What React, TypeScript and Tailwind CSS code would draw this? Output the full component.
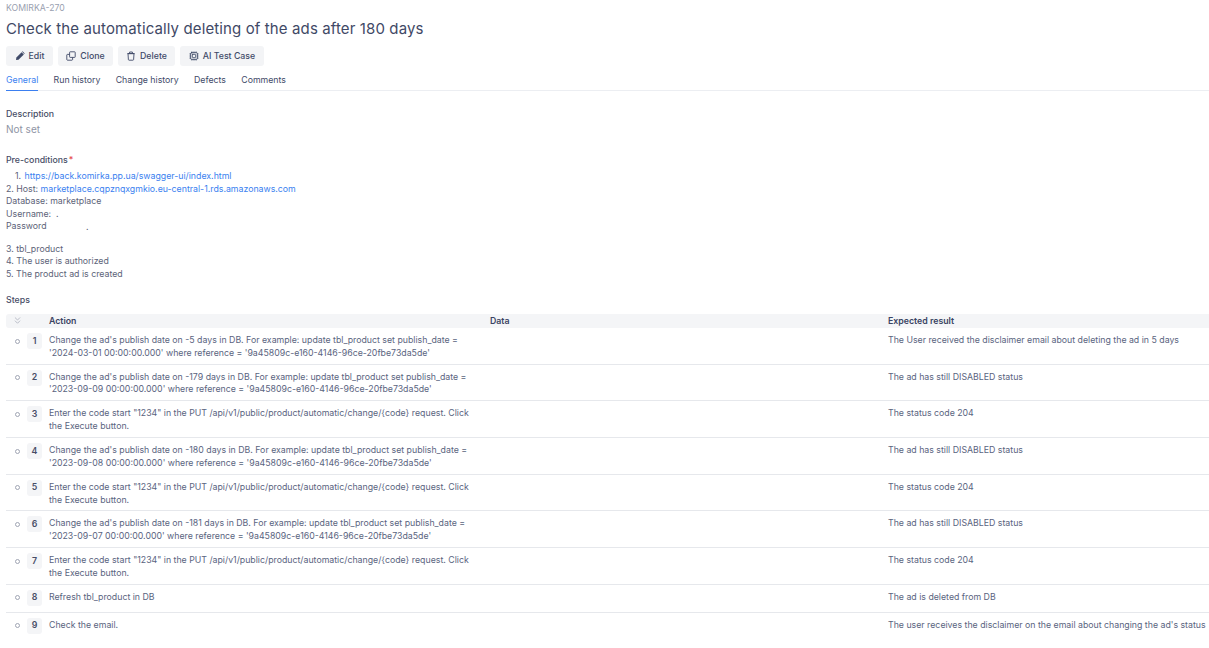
import { ChevronsDown, Cpu } from 'lucide-react';
import type { ReactNode } from 'react';

type Step = {
  num: number;
  action: ReactNode;
  result: string;
  height: string;
};

const PencilIcon = () => (
  <svg width="10" height="10" viewBox="0 0 10 10" fill="currentColor">
    <path d="M6.6 1.2 8.8 3.4 3.5 8.7 1 9.1 1.4 6.5Z" />
    <path d="M7 .8 7.6.3 9.7 2.4 9.2 3Z" />
  </svg>
);

const CloneIcon = () => (
  <svg width="10" height="10" viewBox="0 0 10 10" fill="none" stroke="currentColor" strokeWidth="0.9">
    <rect x="3.6" y="0.8" width="5.6" height="5.6" rx="0.6" />
    <path d="M3.6 3.4H1.4a.6.6 0 0 0-.6.6v4.6c0 .3.3.6.6.6H6c.3 0 .6-.3.6-.6V6.4" />
  </svg>
);

const TrashIcon = () => (
  <svg width="10" height="10" viewBox="0 0 10 10" fill="none" stroke="currentColor" strokeWidth="0.9">
    <path d="M2 2.6h6l-.4 6a.7.7 0 0 1-.7.6H3.100a.7.7 0 0 1-.7-.6Z" />
    <path d="M1.300 2.600h7.400M3.600 2.400V1h2.800v1.400" />
  </svg>
);

const buttons = [
  { label: 'Edit', icon: <PencilIcon />, width: 'w-[47px]' },
  { label: 'Clone', icon: <CloneIcon />, width: 'w-[55px]' },
  { label: 'Delete', icon: <TrashIcon />, width: 'w-[57px]' },
  { label: 'AI Test Case', icon: <Cpu size={10} />, width: 'w-[84px]' },
];

const tabs = ['General', 'Run history', 'Change history', 'Defects', 'Comments'];

const runCode = (
  <>
    Enter the code start "1234" in the PUT /api/v1/public/product/automatic/change/{'{code}'} request. Click
    <br />
    the Execute button.
  </>
);

const sqlUpdate = (days: string, date: string) => (
  <>
    Change the ad's publish date on -{days} days in DB. For example: update tbl_product set publish_date =
    <br />
    '{date} 00:00:00.000' where reference = '9a45809c-e160-4146-96ce-20fbe73da5de'
  </>
);

const steps: Step[] = [
  { num: 1, action: sqlUpdate('5', '2024-03-01'), result: 'The User received the disclaimer email about deleting the ad in 5 days', height: 'h-[36.7px]' },
  { num: 2, action: sqlUpdate('179', '2023-09-09'), result: 'The ad has still DISABLED status', height: 'h-[36.7px]' },
  { num: 3, action: runCode, result: 'The status code 204', height: 'h-[36.7px]' },
  { num: 4, action: sqlUpdate('180', '2023-09-08'), result: 'The ad has still DISABLED status', height: 'h-[36.7px]' },
  { num: 5, action: runCode, result: 'The status code 204', height: 'h-[36.7px]' },
  { num: 6, action: sqlUpdate('181', '2023-09-07'), result: 'The ad has still DISABLED status', height: 'h-[36.7px]' },
  { num: 7, action: runCode, result: 'The status code 204', height: 'h-[36.7px]' },
  { num: 8, action: 'Refresh tbl_product in DB', result: 'The ad is deleted from DB', height: 'h-[27.8px]' },
  { num: 9, action: 'Check the email.', result: "The user receives the disclaimer on the email about changing the ad's status", height: 'h-[27.8px]' },
];

export default function App() {
  return (
    <div className="w-[1209px] h-[648px] overflow-hidden bg-white pl-[6px] font-['Inter',sans-serif] text-[8.78px] leading-[12.5px] text-[#5a6480]">
      <div className="pt-[2px] text-[8.7px] leading-[12px] text-[#9a9fb0]">KOMIRKA-270</div>
      <h1 className="mt-[4px] text-[15px] leading-[22px] font-normal tracking-[0.12px] text-[#3f4966]">
        Check the automatically deleting of the ads after 180 days
      </h1>

      <div className="mt-[6px] flex gap-[5px]">
        {buttons.map((b) => (
          <div
            key={b.label}
            className={`flex h-[20px] items-center justify-center gap-[4px] rounded-[3px] bg-[#f3f4f6] font-medium text-[#3f4a68] ${b.width}`}
          >
            {b.icon}
            {b.label}
          </div>
        ))}
      </div>

      <div className="mt-[3px] flex h-[22px] gap-[15.3px] border-b border-[#eceef2]">
        {tabs.map((t, i) => (
          <div
            key={t}
            className={
              i === 0
                ? 'h-[22px] border-b border-[#3b7ff0] pt-[5px] text-[#3b7ff0]'
                : 'pt-[5px] text-[#3f4a68]'
            }
          >
            {t}
          </div>
        ))}
      </div>

      <div className="mt-[17px] font-medium text-[#474d66]">Description</div>
      <div className="mt-[2px] text-[10px] leading-[13px] text-[#8f95a5]">Not set</div>

      <div className="mt-[18px] font-medium text-[#474d66]">
        Pre-conditions<span className="ml-[1px] text-[#e5484d]">*</span>
      </div>
      <div className="mt-[4px] text-[#5d6378]">
        <div className="pl-[9px]">
          1. <span className="ml-[1px] text-[#3b7ff0]">https://back.komirka.pp.ua/swagger-ui/index.html</span>
        </div>
        <div>
          2. Host: <span className="text-[#3b7ff0]">marketplace.cqpznqxgmkio.eu-central-1.rds.amazonaws.com</span>
        </div>
        <div>Database: marketplace</div>
        <div>Username: &nbsp;.</div>
        <div className="relative">
          Password
          <span className="absolute left-[80px] top-[1px]">.</span>
        </div>
        <div className="mt-[10px]">3. tbl_product</div>
        <div>4. The user is authorized</div>
        <div>5. The product ad is created</div>
      </div>

      <div className="mt-[14px] font-medium text-[#474d66]">Steps</div>
      <div className="mt-[7px] flex h-[14.5px] items-center rounded-l-[3px] bg-[#f4f5f7] font-semibold text-[#3a4463]">
        <div className="flex w-[43px] shrink-0 justify-center pr-[21px]">
          <ChevronsDown size={11} strokeWidth={1.5} className="text-[#a0a5b3]" />
        </div>
        <div className="w-[441px] shrink-0">Action</div>
        <div className="w-[398px] shrink-0">Data</div>
        <div>Expected result</div>
      </div>

      {steps.map((s, i) => (
        <div
          key={s.num}
          className={`flex items-start pt-[6px] leading-[12.8px] ${s.height} ${i < steps.length - 1 ? 'border-b border-[#e6e8ec]' : ''}`}
        >
          <div className="-mt-[1px] flex w-[43px] shrink-0 items-center">
            <div className="ml-[9px] h-[5px] w-[5px] rounded-full border border-[#a0a5b3]" />
            <div className="ml-[7px] flex h-[16px] w-[15px] items-center justify-center rounded-[3px] bg-[#f4f5f7] font-semibold text-[#474d66]">
              {s.num}
            </div>
          </div>
          <div className="w-[441px] shrink-0 whitespace-nowrap">{s.action}</div>
          <div className="w-[398px] shrink-0" />
          <div className="whitespace-nowrap">{s.result}</div>
        </div>
      ))}
    </div>
  );
}
